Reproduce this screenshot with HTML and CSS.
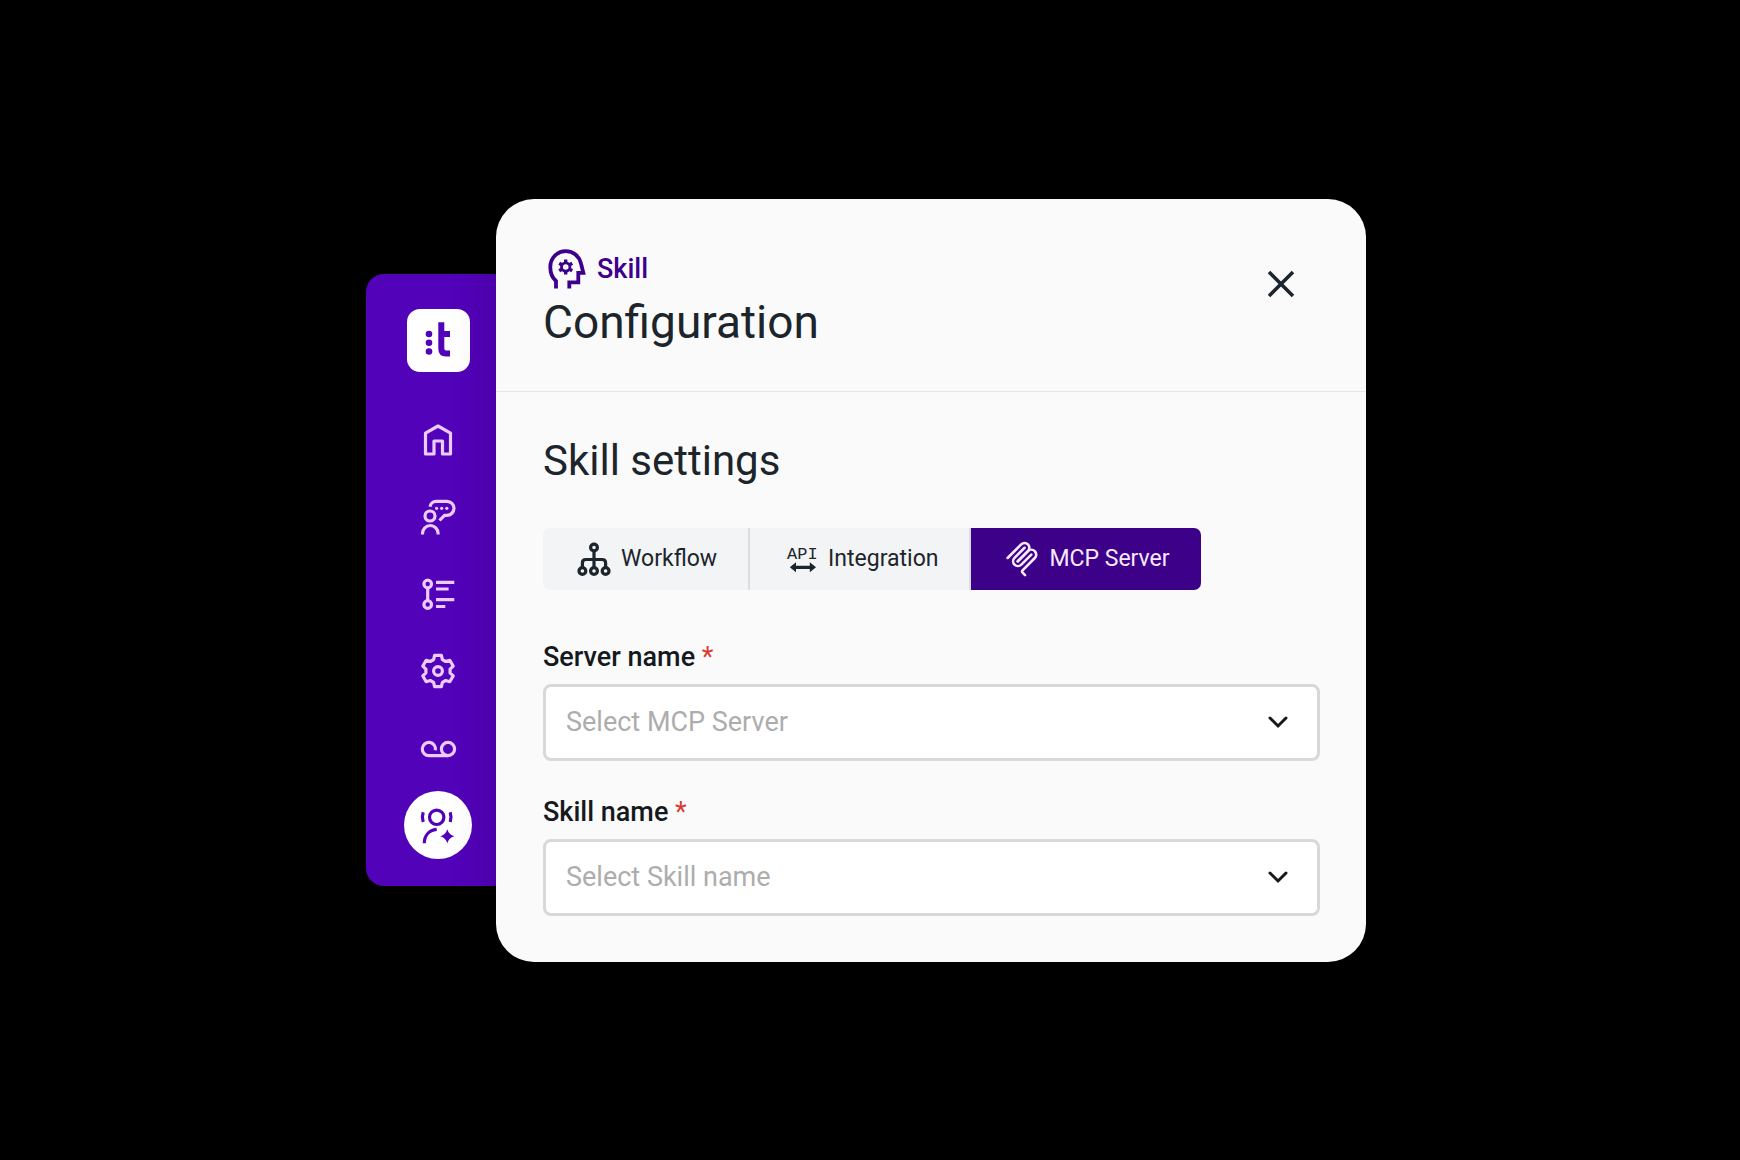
FILE: index.html
```html
<!DOCTYPE html>
<html lang="en">
<head>
<meta charset="utf-8">
<meta name="viewport" content="width=device-width, initial-scale=1">
<title>Skill configuration</title>
<link rel="stylesheet" href="styles.css">
</head>
<body>
<div class="stage">
  <aside class="sidebar">
    <a class="logo" href="#" aria-label="Start">
      <svg viewBox="0 0 63 63" aria-hidden="true">
        <circle cx="22" cy="25" r="3.3"/><circle cx="22" cy="33.800" r="3.3"/><circle cx="22" cy="42.500" r="3.3"/>
        <path class="logo-stem" d="M34.300 13.300V39.500Q34.300 44.500 39 44.500H43M34.300 25H43"/>
      </svg>
    </a>
    <nav class="nav" aria-label="Main">
      <a class="nav-item" href="#" aria-label="Home">
        <svg class="icon" viewBox="0 0 36 36"><path d="M5.500 11.200 18 4l12.500 7.200V32h-8V19H14v13H5.500Z"/></svg>
      </a>
      <a class="nav-item" href="#" aria-label="Conversations">
        <svg class="icon" viewBox="0 0 36 36"><circle cx="10" cy="17" r="5"/><path d="M2.500 35.500v-1a7.800 8 0 0 1 15.600 0v1M10 7.800C10.500 4.500 13 2.300 16 2.300h11a7 7 0 0 1 0 14h-2.500L19.500 21.500"/><g class="solid"><circle cx="16.600" cy="9.300" r="1.600"/><circle cx="21.700" cy="9.300" r="1.600"/><circle cx="26.800" cy="9.300" r="1.600"/></g></svg>
      </a>
      <a class="nav-item" href="#" aria-label="Flows">
        <svg class="icon" viewBox="0 0 36 36"><circle cx="7.700" cy="8" r="3.800"/><circle cx="7.700" cy="28.500" r="3.800"/><path d="M7.700 11.800v13M16 6.300h18.300M16 13h12.600M16 23.600h18.300M16 30.500h9.300"/></svg>
      </a>
      <a class="nav-item" href="#" aria-label="Settings">
        <svg class="icon" viewBox="-18 -18 36 36"><path d="M-3.400-15.600H3.400L4.400-11.400 7.700-9.500 11.800-10.700 15.200-4.900 12.100-1.900V1.900L15.200 4.900 11.800 10.700 7.700 9.500 4.400 11.400 3.400 15.600H-3.400L-4.400 11.400-7.700 9.500-11.800 10.700-15.200 4.900-12.100 1.900V-1.900L-15.200-4.900-11.800-10.700-7.700-9.500-4.400-11.400Z"/><circle r="4.400"/></svg>
      </a>
      <a class="nav-item" href="#" aria-label="Recordings">
        <svg class="icon" viewBox="0 0 36 36"><path d="M15.400 20.200A6.600 6.600 0 1 0 9 25.600H28"/><circle cx="28" cy="19" r="6.600"/></svg>
      </a>
      <a class="nav-item nav-item-active" href="#" aria-label="Agents" aria-current="page">
        <svg class="icon" viewBox="0 0 36 36"><circle cx="16.700" cy="10.300" r="7.200"/><path d="M3.200 5.300Q1.600 10 3.200 15M30.200 5.300Q31.800 10 30.200 15M4.300 36.300C4.300 28.500 9 23.200 16.700 22.300"/><path class="solid" d="M27.300 22.300Q28.900 27.700 34.300 29.300 28.900 30.900 27.300 36.300 25.700 30.900 20.300 29.300 25.700 27.700 27.300 22.300Z"/></svg>
      </a>
    </nav>
  </aside>

  <main class="card">
    <header class="card-header">
      <div class="heading">
        <p class="eyebrow">
          <svg class="skill-icon" viewBox="0 0 40 40" aria-hidden="true"><path d="M8 39.500V32C4.300 28.800 2.300 24 2.300 18.200 2.300 9 9 2.200 17.800 2.200 25.500 2.200 31.500 7.500 33 14.500L35.300 23.800H30.300V33.300H21.300V39.500"/><circle class="cog-ring" cx="17.700" cy="18" r="4.200"/><path class="cog-teeth" d="M17.700 14V10.500M21.200 16L24.200 14.200M21.200 20L24.200 21.800M17.700 22V25.500M14.200 20L11.200 21.800M14.200 16L11.200 14.200"/></svg>
          Skill
        </p>
        <h1 class="title">Configuration</h1>
      </div>
      <button class="close" type="button" aria-label="Close">
        <svg viewBox="0 0 40 40" aria-hidden="true"><path d="M8 8 32 32M32 8 8 32"/></svg>
      </button>
    </header>

    <form class="card-body">
      <h2 class="subtitle">Skill settings</h2>
      <div class="tabs" role="group" aria-label="Skill type">
        <button class="tab" type="button">
          <svg class="icon" viewBox="0 0 36 36" aria-hidden="true"><circle cx="18" cy="6.500" r="3.400"/><circle cx="6.400" cy="30" r="3.400"/><circle cx="18" cy="30" r="3.400"/><circle cx="29.600" cy="30" r="3.400"/><path d="M18 10v16.500M6.400 26.500V22q0-3.500 3.500-3.500h16.200q3.500 0 3.500 3.500v4.500"/></svg>
          Workflow
        </button>
        <button class="tab" type="button">
          <svg class="icon" viewBox="0 0 36 36" aria-hidden="true"><text class="api-text" x="4" y="18">API</text><path d="M11 26.300H29"/><path class="solid" d="M6.800 26.300 13 21.300V31.300ZM33 26.300 26.800 21.300V31.300Z"/></svg>
          Integration
        </button>
        <button class="tab tab-active" type="button" aria-pressed="true">
          <svg class="mcp-icon" viewBox="0 0 180 180" aria-hidden="true"><path d="M18 84.853 85.882 16.971C95.255 7.598 110.451 7.598 119.823 16.971 129.196 26.343 129.196 41.539 119.823 50.912L68.558 102.177"/><path d="M69.265 101.470 119.823 50.912C129.196 41.539 144.392 41.539 153.765 50.912L154.118 51.265C163.491 60.638 163.491 75.834 154.118 85.206L92.725 146.600C89.601 149.724 89.601 154.789 92.725 157.913L105.331 170.520"/><path d="M102.853 33.941 52.648 84.146C43.276 93.518 43.276 108.714 52.648 118.087 62.021 127.459 77.217 127.459 86.589 118.087L136.794 67.882"/></svg>
          MCP Server
        </button>
      </div>

      <div class="fields">
        <div class="field">
          <label class="label" for="server">Server name <span class="required">*</span></label>
          <div class="select-wrap">
            <select class="select" id="server" required><option value="">Select MCP Server</option></select>
            <svg class="chevron" viewBox="0 0 24 24" aria-hidden="true"><path d="M4 8l8 8 8-8"/></svg>
          </div>
        </div>
        <div class="field">
          <label class="label" for="skill">Skill name <span class="required">*</span></label>
          <div class="select-wrap">
            <select class="select" id="skill" required><option value="">Select Skill name</option></select>
            <svg class="chevron" viewBox="0 0 24 24" aria-hidden="true"><path d="M4 8l8 8 8-8"/></svg>
          </div>
        </div>
      </div>
    </form>
  </main>
</div>
</body>
</html>
```

FILE: styles.css
```css
* {
  box-sizing: border-box;
}

body {
  margin: 0;
  background: #000;
  color: #1c252b;
  font-family: Roboto, "Liberation Sans", sans-serif;
}

svg {
  display: block;
  flex: none;
  fill: none;
  stroke: currentColor;
}

.stage {
  display: flex;
  align-items: center;
  justify-content: center;
  min-height: 100vh;
  padding: 24px 32px 24px 24px;
}

/* Navigation rail; its right edge is tucked under the card */
.sidebar {
  display: flex;
  flex: none;
  flex-direction: column;
  align-items: center;
  gap: 34px;
  width: 144px;
  margin-right: -14px;
  padding: 35px 0 27px;
  border-radius: 18px;
  background: #5202b8;
}

.logo {
  width: 63px;
  height: 63px;
  border-radius: 13px;
  background: #fff;
  color: #5202b8;
}

.logo circle {
  fill: currentColor;
  stroke: none;
}

.logo-stem {
  stroke-width: 6;
}

.nav {
  display: flex;
  flex-direction: column;
  gap: 9px;
}

.nav-item {
  display: flex;
  align-items: center;
  justify-content: center;
  width: 68px;
  height: 68px;
  border-radius: 50%;
  color: #eccbff;
}

.nav-item-active {
  background: #fff;
  color: #5202b8;
}

.icon {
  width: 36px;
  height: 36px;
  overflow: visible;
  stroke-width: 3.2;
  stroke-linejoin: round;
}

.solid {
  fill: currentColor;
  stroke: none;
}

.card {
  position: relative;
  flex: 0 1 870px;
  min-width: 0;
  border-radius: 38px;
  background: #fafafb;
  box-shadow: 0 0 48px rgba(0, 0, 0, 0.16);
}

.card-header {
  display: flex;
  align-items: flex-start;
  justify-content: space-between;
  padding: 50px 65px 42px 47px;
  border-bottom: 1px solid #e6e6e8;
}

.eyebrow {
  display: flex;
  align-items: center;
  gap: 9px;
  margin: 0 0 6px 5px;
  color: #3c008c;
  font-size: 27px;
  font-weight: 500;
  line-height: 40px;
}

.skill-icon {
  width: 40px;
  height: 40px;
  stroke-width: 3.8;
}

.cog-ring {
  stroke-width: 2.8;
}

.cog-teeth {
  stroke-width: 3.4;
}

.title,
.subtitle {
  margin: 0;
  font-weight: 400;
}

.title {
  font-size: 46px;
  line-height: 54px;
}

.close {
  width: 40px;
  height: 40px;
  margin-top: 15px;
  padding: 0;
  border: 0;
  background: none;
  color: #1c252b;
  stroke-width: 3.6;
}

.card-body {
  padding: 44px 46px 46px 47px;
}

.subtitle {
  font-size: 42px;
  line-height: 50px;
}

.tabs {
  display: inline-flex;
  margin-top: 42px;
  overflow: hidden;
  border-radius: 7px;
  background: #f3f4f6;
}

.tab {
  display: flex;
  align-items: center;
  gap: 9px;
  height: 62px;
  padding: 0 31px 0 33px;
  border: 0;
  border-right: 2px solid #dcdee1;
  background: none;
  color: #1c252b;
  font: 400 23px/30px Roboto, "Liberation Sans", sans-serif;
}

.tab-active {
  border-right: 0;
  background: #3d0089;
  color: #f9e9ff;
}

.mcp-icon {
  width: 36px;
  height: 36px;
  stroke-width: 13;
  stroke-linecap: round;
}

.api-text {
  fill: currentColor;
  stroke: none;
  font: 17px "Liberation Mono", monospace;
}

.fields {
  display: grid;
  gap: 35px;
  margin-top: 51px;
}

.field {
  display: grid;
  gap: 11px;
}

.label {
  color: #15191d;
  font-size: 27px;
  font-weight: 500;
  line-height: 32px;
}

.required {
  color: #d93a2f;
  font-weight: 400;
}

/* The arrow shares the grid cell of its select */
.select-wrap {
  display: grid;
  grid-template-areas: "control";
  align-items: center;
}

.select,
.chevron {
  grid-area: control;
}

.select {
  width: 100%;
  height: 77px;
  padding: 0 64px 0 20px;
  appearance: none;
  border: 3px solid #d8d8d8;
  border-radius: 8px;
  background: #fff;
  color: #adadad;
  font: 400 27px/36px Roboto, "Liberation Sans", sans-serif;
}

.chevron {
  width: 24px;
  height: 24px;
  justify-self: end;
  margin-right: 30px;
  color: #15191d;
  stroke-width: 3;
  stroke-linecap: round;
  pointer-events: none;
}
```
